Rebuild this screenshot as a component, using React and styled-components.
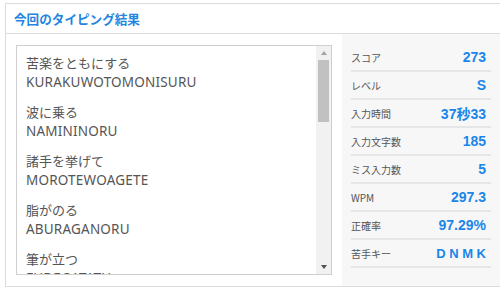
import React from 'react';
import styled, { createGlobalStyle } from 'styled-components';

const GlobalStyle = createGlobalStyle`
  html, body {
    margin: 0;
    padding: 0;
    overflow: hidden;
    background: #fff;
  }
  body {
    font-family: "Noto Sans", "Noto Sans CJK JP", sans-serif;
  }
`;

const Card = styled.div`
  margin: 3px 0 0 5px;
  width: 497px;
  height: 284px;
  box-sizing: border-box;
  border: 1px solid #dcdcdc;
  background: #fff;
  display: flex;
  flex-direction: column;
`;

const Header = styled.div`
  height: 29px;
  border-bottom: 1px solid #dcdcdc;
  display: flex;
  align-items: center;
  padding-left: 8px;
`;

const Title = styled.h2`
  margin: 0;
  font-size: 12.6px;
  font-weight: bold;
  color: #1f85e0;
  font-family: "Noto Sans CJK JP", sans-serif;
`;

const Body = styled.div`
  flex: 1;
  display: flex;
  min-height: 0;
`;

const ListWrap = styled.div`
  padding: 11px 10px;
`;

const ListBox = styled.div`
  width: 316px;
  height: 230px;
  box-sizing: border-box;
  border: 1px solid #cfcfcf;
  display: flex;
  background: #fff;
`;

const List = styled.div`
  flex: 1;
  overflow: hidden;
  padding: 7px 9px;
`;

const Item = styled.div`
  margin-bottom: 10px;
  font-size: 13px;
  line-height: 19.5px;
  color: #555;
`;

const Kanji = styled.div`
  font-family: "Noto Sans CJK JP", sans-serif;
`;

const Romaji = styled.div`
  font-family: "Noto Sans", "Noto Sans CJK JP", sans-serif;
  font-size: 13.5px;
  letter-spacing: 0.2px;
`;

const ScrollBar = styled.div`
  width: 15px;
  background: #f1f1f1;
  display: flex;
  flex-direction: column;
  align-items: center;
`;

const Arrow = styled.div`
  height: 14px;
  display: flex;
  align-items: center;
  justify-content: center;
  &::before {
    content: '';
    border-left: 3.5px solid transparent;
    border-right: 3.5px solid transparent;
    ${({ $down }) => ($down
      ? 'border-top: 4px solid #505050;'
      : 'border-bottom: 4px solid #a3a3a3;')}
  }
`;

const Thumb = styled.div`
  width: 11px;
  height: 62px;
  background: #c1c1c1;
`;

const Spacer = styled.div`
  flex: 1;
`;

const Stats = styled.div`
  flex: 1;
  background: #f7f7f7;
  padding: 10px 10px 0 9px;
`;

const Row = styled.div`
  height: 26px;
  border-bottom: 2px solid #e6e6e6;
  display: flex;
  align-items: center;
  justify-content: space-between;
  padding-right: 5px;
`;

const Label = styled.span`
  font-size: 10px;
  color: #555;
  font-family: "Noto Sans CJK JP", sans-serif;
`;

const Value = styled.span`
  font-size: ${({ $size }) => $size || 14}px;
  font-weight: bold;
  color: #1a86ea;
  font-family: "Liberation Sans", "Noto Sans CJK JP", sans-serif;
`;

const words = [
  ['苦楽をともにする', 'KURAKUWOTOMONISURU'],
  ['波に乗る', 'NAMININORU'],
  ['諸手を挙げて', 'MOROTEWOAGETE'],
  ['脂がのる', 'ABURAGANORU'],
  ['筆が立つ', 'FUDEGATATU'],
];

const stats = [
  ['スコア', '273'],
  ['レベル', 'S'],
  ['入力時間', '37秒33'],
  ['入力文字数', '185'],
  ['ミス入力数', '5'],
  ['WPM', '297.3'],
  ['正確率', '97.29%'],
  ['苦手キー', 'D N M K', 13],
];

export default function App() {
  return (
    <>
      <GlobalStyle />
      <Card>
        <Header>
          <Title>今回のタイピング結果</Title>
        </Header>
        <Body>
          <ListWrap>
            <ListBox>
              <List>
                {words.map(([jp, ro]) => (
                  <Item key={ro}>
                    <Kanji>{jp}</Kanji>
                    <Romaji>{ro}</Romaji>
                  </Item>
                ))}
              </List>
              <ScrollBar>
                <Arrow />
                <Thumb />
                <Spacer />
                <Arrow $down />
              </ScrollBar>
            </ListBox>
          </ListWrap>
          <Stats>
            {stats.map(([label, value, size]) => (
              <Row key={label}>
                <Label>{label}</Label>
                <Value $size={size}>{value}</Value>
              </Row>
            ))}
          </Stats>
        </Body>
      </Card>
    </>
  );
}
